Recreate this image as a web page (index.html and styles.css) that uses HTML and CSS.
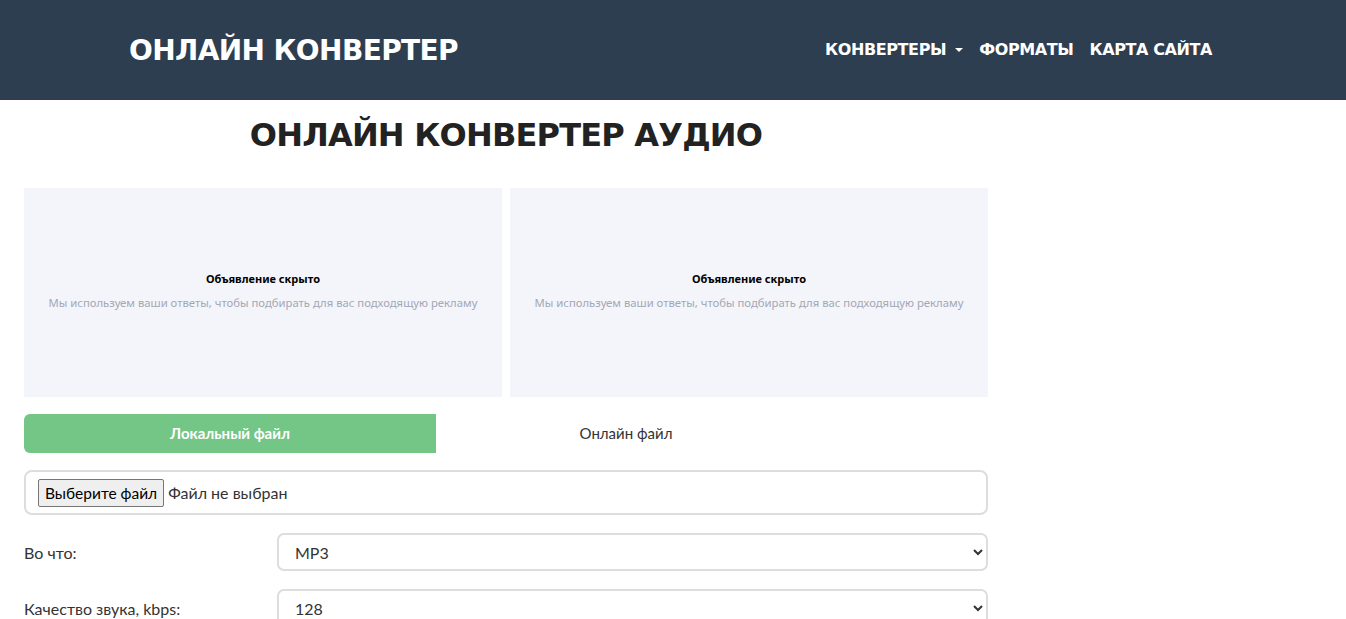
FILE: index.html
```html
<!DOCTYPE html>
<html lang="ru">

<head>
    <meta charset="UTF-8">
    <meta name="viewport" content="width=device-width, initial-scale=1.0">
    <title>Онлайн конвертер аудио</title>
    <link rel="stylesheet" href="styles.css">
</head>

<body>

    <!-- шапка -->
    <header class="site-header">
        <div class="header-inner">
            <a class="logo" href="#">ОНЛАЙН КОНВЕРТЕР</a>
            <nav class="main-nav">
                <a href="#" class="dropdown">КОНВЕРТЕРЫ <span class="caret"></span></a>
                <a href="#">ФОРМАТЫ</a>
                <a href="#">КАРТА САЙТА</a>
            </nav>
        </div>
    </header>

    <div class="page">
        <main class="content">
            <h1>ОНЛАЙН КОНВЕРТЕР АУДИО</h1>

            <!-- рекламные блоки -->
            <div class="ads">
                <div class="ad-box">
                    <div class="ad-title">Объявление скрыто</div>
                    <div class="ad-text">Мы используем ваши ответы, чтобы подбирать для вас подходящую рекламу</div>
                </div>
                <div class="ad-box">
                    <div class="ad-title">Объявление скрыто</div>
                    <div class="ad-text">Мы используем ваши ответы, чтобы подбирать для вас подходящую рекламу</div>
                </div>
            </div>

            <div class="tabs">
                <div class="tab active">Локальный файл</div>
                <div class="tab">Онлайн файл</div>
            </div>

            <div class="file-box">
                <button class="file-btn" type="button">Выберите файл</button>
                <span class="file-name">Файл не выбран</span>
            </div>

            <div class="form-row">
                <label for="format">Во что:</label>
                <select id="format">
                    <option>MP3</option>
                    <option>WAV</option>
                    <option>OGG</option>
                </select>
            </div>

            <div class="form-row">
                <label for="bitrate">Качество звука, kbps:</label>
                <select id="bitrate">
                    <option>128</option>
                    <option>192</option>
                    <option>320</option>
                </select>
            </div>
        </main>
        <aside class="sidebar"></aside>
    </div>

</body>

</html>
```

FILE: styles.css
```css
body {
    margin: 0;
    font-family: Lato, "Open Sans", sans-serif;
    font-size: 16px;
    color: #333;
    background: #fff;
}

.site-header {
    background-color: #2c3e50;
    height: 100px;
}

.header-inner {
    display: flex;
    align-items: center;
    justify-content: space-between;
    height: 100%;
    padding: 0 134px 0 129px;
}

.logo {
    color: #fff;
    text-decoration: none;
    font-family: "DejaVu Sans", sans-serif;
    font-weight: bold;
    font-size: 28px;
    letter-spacing: -0.6px;
}

.main-nav {
    display: flex;
    gap: 16px;
    margin-top: -2px;
}

.main-nav a {
    color: #fff;
    text-decoration: none;
    font-family: "DejaVu Sans", sans-serif;
    font-weight: bold;
    font-size: 16px;
    letter-spacing: -0.4px;
}

.caret {
    display: inline-block;
    margin-left: 4px;
    vertical-align: middle;
    border-top: 4px solid #fff;
    border-left: 4px solid transparent;
    border-right: 4px solid transparent;
}

.page {
    display: grid;
    grid-template-columns: 964px 1fr;
    padding: 0 24px;
}

h1 {
    margin: 16px 0 0;
    height: 72px;
    text-align: center;
    font-family: "DejaVu Sans", sans-serif;
    font-weight: bold;
    font-size: 32px;
    letter-spacing: -0.8px;
    color: #222;
}

.ads {
    display: flex;
    gap: 8px;
}

.ad-box {
    flex: 1;
    height: 209px;
    box-sizing: border-box;
    padding-bottom: 5px;
    background-color: #f4f5fa;
    display: flex;
    flex-direction: column;
    align-items: center;
    justify-content: center;
    text-align: center;
}

.ad-title {
    font-family: "Noto Sans", sans-serif;
    font-weight: bold;
    font-size: 11px;
    color: #000;
    margin-bottom: 9px;
}

.ad-text {
    font-family: "Noto Sans", sans-serif;
    font-size: 11.3px;
    color: #a3a7b6;
}

.tabs {
    display: flex;
    margin-top: 17px;
}

.tab {
    height: 39px;
    line-height: 39px;
    text-align: center;
    font-size: 15px;
}

.tab.active {
    width: 412px;
    background-color: #74c686;
    color: #fff;
    font-weight: bold;
    border-radius: 6px 0 0 6px;
}

.tab:not(.active) {
    width: 380px;
}

.file-box {
    margin-top: 17px;
    height: 41px;
    border: 2px solid #ddd;
    border-radius: 8px;
    display: flex;
    align-items: center;
    padding: 0 12px;
}

.file-btn {
    height: 28px;
    padding: 0 6px;
    font-family: inherit;
    font-size: 15.5px;
    color: #000;
    background-color: #efefef;
    border: 1px solid #767676;
    border-radius: 2px;
}

.file-name {
    margin-left: 4px;
}

.form-row {
    display: grid;
    grid-template-columns: 253px 1fr;
    align-items: center;
    margin-top: 18px;
}

.form-row select {
    height: 38px;
    padding: 0 12px;
    font-family: inherit;
    font-size: 16px;
    color: #333;
    background-color: #fff;
    border: 2px solid #ddd;
    border-radius: 7px;
}
```
